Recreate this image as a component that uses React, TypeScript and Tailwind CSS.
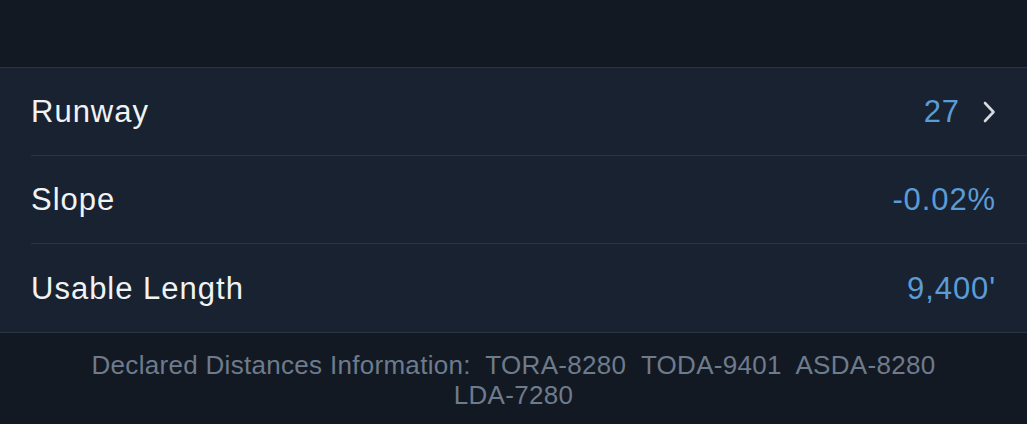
import React from 'react'

interface Row {
  label: string
  value: string
  chevron?: boolean
}

const rows: Row[] = [
  { label: 'Runway', value: '27', chevron: true },
  { label: 'Slope', value: '-0.02%' },
  { label: 'Usable Length', value: "9,400'" },
]

const Chevron = () => (
  <svg width="14" height="24" viewBox="0 0 14 24" fill="none" className="ml-[22px]">
    <path d="M3 3l8.5 9L3 21" stroke="#d6d9de" strokeWidth="2.6" strokeLinecap="round" strokeLinejoin="round" />
  </svg>
)

export default function App() {
  return (
    <div
      className="w-[1027px] h-[424px] bg-[#121923] overflow-hidden"
      style={{ fontFamily: '"Liberation Sans", Arial, sans-serif' }}
    >
      <div className="h-[67px]" />
      <div className="bg-[#182230] border-y border-[#2a3544]">
        {rows.map((row, i) => (
          <div key={row.label} className="pl-[31px]">
            <div
              className={`flex items-center h-[88px] pr-[31px] ${
                i < rows.length - 1 ? 'border-b border-[#2a3544]' : ''
              }`}
            >
              <span className="pt-[2px] text-[31px] text-[#f1f2f4] tracking-[1px]">{row.label}</span>
              <div className="ml-auto flex items-center">
                <span className="pt-[2px] text-[31px] text-[#5b9bd6] tracking-[0.9px]">{row.value}</span>
                {row.chevron && <Chevron />}
              </div>
            </div>
          </div>
        ))}
      </div>
      <div className="px-[20px] pt-[17px] text-center text-[26px] leading-[30px] tracking-[0.3px] text-[#6e7b8c]">
        <div className="whitespace-pre">Declared Distances Information:  TORA-8280  TODA-9401  ASDA-8280</div>
        <div>LDA-7280</div>
      </div>
    </div>
  )
}
